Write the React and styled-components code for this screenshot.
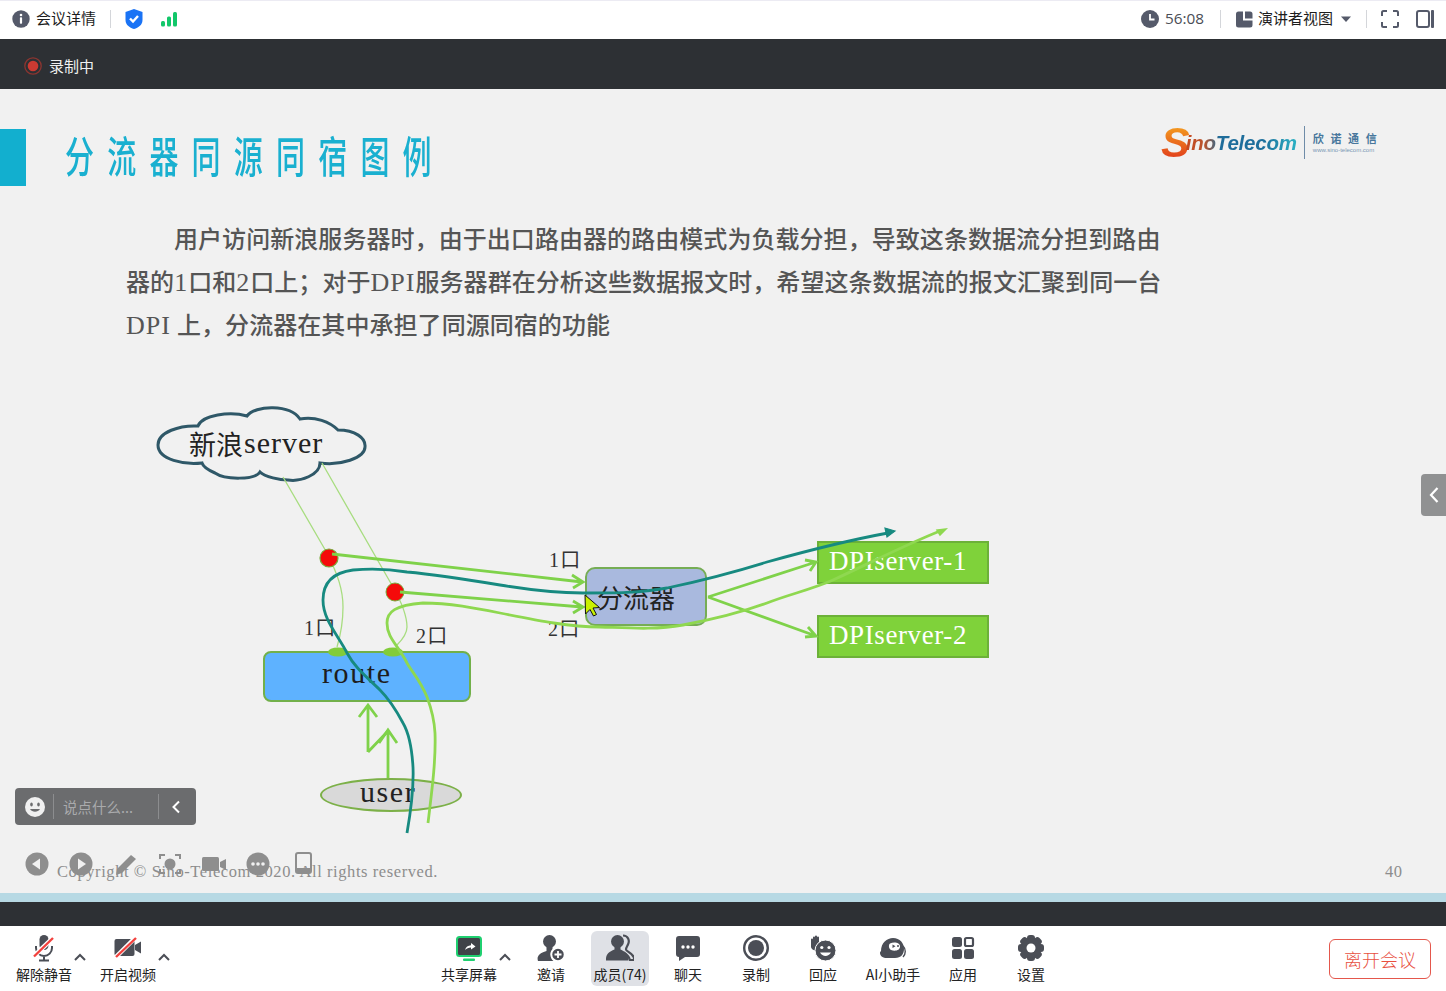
import React from 'react';
import styled, { createGlobalStyle } from 'styled-components';

const UI = '"Noto Sans CJK SC", "Liberation Sans", sans-serif';
const SERIF = '"Liberation Serif", "Noto Sans CJK SC", serif';
const INK = '#4b4e56';
const SLIDE_TOP = 89;

const Global = createGlobalStyle`
  html, body { margin: 0; padding: 0; background: #fff; }
  * { box-sizing: border-box; }
`;
const Page = styled.div`
  width: 1446px; height: 991px; display: flex; flex-direction: column; overflow: hidden;
  font-family: ${UI}; color: #222;
`;
const TopBar = styled.header`
  height: 39px; flex: none; background: #fff; border-top: 1px solid #ecebf3;
  display: flex; align-items: center; justify-content: space-between; padding: 0 12px 2px;
`;
const Cluster = styled.div`display: flex; align-items: center;`;
const TopText = styled.span`
  font-size: 15px; line-height: 20px; color: #1c1c1c; margin: 0 0 2px ${p => p.$ml || 6}px; white-space: nowrap;
`;
const Time = styled(TopText)`font-family: "Open Sans", "Liberation Sans", sans-serif; font-size: 15.3px; color: #4a4d55;`;
const Sep = styled.i`
  display: block; width: 1px; height: 18px; background: #d4d6da; margin: 0 ${p => p.$r ?? 14}px 0 ${p => p.$l ?? 14}px;
`;
const Gap = styled.span`flex: none; width: ${p => p.$w}px;`;
const RecBar = styled.div`
  height: 50px; flex: none; background: #2d3034; display: flex; align-items: center; padding: 3px 0 0 24px;
`;
const RecText = styled.span`color: #f0f0f0; font-size: 15px; margin: 0 0 1px 7px;`;
const Slide = styled.main`position: relative; flex: 1; background: #f1f1f1; overflow: hidden;`;
const SlideHead = styled.div`display: flex; align-items: flex-start; padding-top: 40px; height: 112px;`;
const Accent = styled.div`width: 26px; height: 57px; background: #12afcf; flex: none;`;
const Title = styled.h1`
  margin: -3px 0 0 39px; font-weight: 500; font-size: 29px; line-height: 57px; letter-spacing: 13.2px;
  color: #1ab0d0; transform: scaleY(1.5); transform-origin: 0 50%; white-space: nowrap;
`;
const Logo = styled.div`
  position: absolute; left: 1161px; top: 35px; display: flex; align-items: center; height: 36px;
`;
const LogoS = styled.span`
  font: italic 700 43px/36px "Liberation Sans", sans-serif; margin-right: -4px;
  background: linear-gradient(#f5a21f, #e03a1c); -webkit-background-clip: text; background-clip: text; color: transparent;
`;
const LogoWord = styled.span`
  font: italic 700 20.5px/30px "Liberation Sans", sans-serif; letter-spacing: -0.2px; margin-top: 2px;
  background: linear-gradient(90deg, #c8481f 0, #b8552f 17%, #1f6c9a 30%, #1d6f9c 70%, #2cb2c4 100%);
  -webkit-background-clip: text; background-clip: text; color: transparent;
`;
const LogoRule = styled.i`display: block; width: 1px; height: 33px; background: #6f8ca8; margin: 0 8px 0 7px;`;
const LogoCn = styled.div`display: flex; flex-direction: column; align-items: flex-start;`;
const LogoCnTop = styled.span`font-size: 11px; line-height: 16px; font-weight: 700; letter-spacing: 6.6px; color: #47769c; white-space: nowrap;`;
const LogoUrl = styled.span`font: 6px/8px "Liberation Sans", sans-serif; color: #7b97b4; white-space: nowrap;`;
const Para = styled.p`
  margin: 18px 0 0 126px; font-family: ${SERIF}; font-size: 24px; font-weight: 500; line-height: 43px; color: #555;
  letter-spacing: 0.06px; white-space: nowrap;
`;
const Line = styled.span`display: block; height: 43px; padding-left: ${p => p.$indent || 0}px;`;
const Latin = styled.span`font-size: 26px; line-height: 1; letter-spacing: 1px;`;
const Wires = styled.svg`position: absolute; left: 0; top: 0; width: 1446px; height: 804px; pointer-events: none;`;
const Node = styled.div`
  position: absolute; left: ${p => p.$x}px; top: ${p => p.$y - SLIDE_TOP}px; width: ${p => p.$w}px; height: ${p => p.$h}px;
  display: flex; align-items: center; font-family: ${SERIF}; white-space: nowrap;
`;
const CloudLabel = styled(Node)`font-size: 27px; color: #222;`;
const CloudWord = styled.span`font-size: 30px; letter-spacing: 1px; margin-left: 1px;`;
const PortLabel = styled(Node)`font-size: 20px; letter-spacing: 1.2px; color: #333;`;
const RouteBox = styled(Node)`
  background: #5eb2ff; border: 2px solid #72b04a; border-radius: 8px; font-size: 30px; letter-spacing: 1.6px; color: #1d1d1d;
  padding-left: 57px; padding-bottom: 7px;
`;
const SplitBox = styled(Node)`
  background: #a9b9de; border: 2px solid #76ad55; border-radius: 10px; font-size: 26px; color: #222; padding: 0 0 0 10px;
`;
const ServerBox = styled(Node)`
  background: #7fd23a; border: 2px solid #6cb138; color: #fff; font-size: 27px; padding: 0 0 2px 10px; letter-spacing: 0.6px;
`;
const UserOval = styled(Node)`background: #d9d9d9; border: 2px solid #7cb048; border-radius: 50%;`;
const UserLabel = styled(Node)`font-size: 30px; letter-spacing: 1.6px; color: #222;`;
const ChatBar = styled.div`
  position: absolute; left: 15px; top: ${788 - SLIDE_TOP}px; width: 181px; height: 37px; border-radius: 4px;
  background: #6b6c6e; display: flex; align-items: center; padding-left: 10px;
`;
const ChatDivider = styled.i`display: block; width: 1px; height: 25px; background: #8c8d8f;`;
const ChatHint = styled.span`width: 104px; padding-left: 9px; font-size: 14.5px; color: #a9aaac; white-space: nowrap;`;
const Playback = styled.div`
  position: absolute; left: 25px; top: ${852 - SLIDE_TOP}px; display: flex; gap: 20.3px; align-items: center;
`;
const FootText = styled.div`
  position: absolute; left: 57px; top: ${862 - SLIDE_TOP}px; font: 16.5px/19px ${SERIF}; letter-spacing: 0.58px; color: #8d8d8d; white-space: nowrap;
`;
const PageNum = styled.div`
  position: absolute; left: 1385px; top: ${862 - SLIDE_TOP}px; font: 16.5px/19px ${SERIF}; letter-spacing: 0.6px; color: #8d8d8d;
`;
const SideTab = styled.div`
  position: absolute; right: 0; top: ${474 - SLIDE_TOP}px; width: 25px; height: 42px; border-radius: 4px 0 0 4px;
  background: #909192; display: flex; align-items: center; justify-content: center;
`;
const Stripe = styled.div`height: 9px; flex: none; background: #b7d9e4;`;
const DarkBand = styled.div`height: 24px; flex: none; background: #2d3034;`;
const Toolbar = styled.footer`height: 65px; flex: none; background: #fff; display: flex; align-items: flex-start; padding: 5px 15px 0 16px;`;
const Tool = styled.div`
  flex: none; width: ${p => p.$w || 56}px; height: 55px; margin-left: ${p => p.$ml || 0}px; border-radius: 6px;
  background: ${p => (p.$active ? '#dfe1e6' : 'transparent')}; display: flex; flex-direction: column; align-items: center; padding-top: 3px;
`;
const ToolLabel = styled.span`font-size: 14px; line-height: 20px; margin-top: 2px; color: #222; white-space: nowrap;`;
const Caret = styled.div`flex: none; width: 16px; height: 55px; display: flex; justify-content: center; padding-top: 22px;`;
const Leave = styled.button`
  margin-left: auto; margin-top: 8px; width: 102px; height: 40px; border: 1px solid #e4574c; border-radius: 6px; background: #fff;
  color: #e8503f; font: 300 18px/24px ${UI}; padding: 0;
`;

const Ico = ({ children, s = 28, w, h, vb }) => (
  <svg width={w || s} height={h || s} viewBox={vb || `0 0 ${s} ${s}`} style={{ display: 'block', flex: 'none' }}>{children}</svg>
);

const MicIcon = () => (
  <Ico>
    <rect x="9.5" y="1" width="9" height="15" rx="4.5" fill={INK} />
    <path d="M6 12v2a8 8 0 0 0 16 0v-2M14 22v4M9 26.5h10" fill="none" stroke={INK} strokeWidth="2" />
    <path d="M3 23L23 4" stroke="#fff" strokeWidth="4.5" />
    <path d="M4 22.5L23 4" stroke="#f2413d" strokeWidth="2.4" />
  </Ico>
);
const VideoIcon = () => (
  <Ico>
    <rect x="0.5" y="5" width="20" height="17" rx="2" fill={INK} />
    <path d="M21 11l6-3.5v12L21 16z" fill={INK} />
    <path d="M1 24L21 4" stroke="#fff" strokeWidth="4.5" />
    <path d="M2 23L22 4" stroke="#f2413d" strokeWidth="2.4" />
  </Ico>
);
const ShareIcon = () => (
  <Ico>
    <rect x="2" y="3" width="24" height="19" rx="2.5" fill="#3f4248" stroke="#1fd070" strokeWidth="2" />
    <rect x="8" y="24.5" width="12" height="2.5" rx="1" fill="#1fd070" />
    <path d="M10 16c.8-3.2 3-4.6 6-4.8V9l4.5 3.4-4.5 3.2v-2.2c-2.4 0-4.4.8-6 2.6z" fill="#fff" />
  </Ico>
);
const InviteIcon = () => (
  <Ico>
    <circle cx="12.5" cy="7.5" r="6.5" fill={INK} />
    <path d="M9.5 13h6v2c-3 3-3 9 1 12H1c-1.5-4 1-8 8.5-10z" fill={INK} />
    <circle cx="21" cy="20.5" r="6.5" fill={INK} stroke="#fff" strokeWidth="1.5" />
    <path d="M21 17v7M17.5 20.5h7" stroke="#fff" strokeWidth="1.8" />
  </Ico>
);
const MembersIcon = () => (
  <Ico>
    <path d="M17 1.5c5 0 7 5 5 9-1 2-2 3-2 5 0 2 6 3 8 8v2.5h-4c-1-4-4-6-6.5-7.5" fill="none" stroke={INK} strokeWidth="2.2" />
    <circle cx="11.5" cy="7.5" r="6.5" fill={INK} />
    <path d="M8.5 12h6v3.5c3 1.5 7 3 8 8.5v2.5H0V24c1-5.5 5-7 8.5-8.5z" fill={INK} />
  </Ico>
);
const ChatIcon = () => (
  <Ico>
    <path d="M5 2h18a3 3 0 0 1 3 3v15a3 3 0 0 1-3 3H11l-6 4v-4a3 3 0 0 1-3-3V5a3 3 0 0 1 3-3z" fill={INK} />
    <circle cx="9" cy="13" r="1.7" fill="#fff" /><circle cx="14" cy="13" r="1.7" fill="#fff" /><circle cx="19" cy="13" r="1.7" fill="#fff" />
  </Ico>
);
const RecordIcon = () => (
  <Ico>
    <circle cx="14" cy="14" r="11.8" fill="none" stroke={INK} strokeWidth="2.4" />
    <circle cx="14" cy="14" r="8" fill={INK} />
  </Ico>
);
const ReactIcon = () => (
  <Ico>
    <path d="M2 13V5.5a1 1 0 0 1 2 0V3.500a1 1 0 0 1 2 0V2.500a1 1 0 0 1 2 0v1a1 1 0 0 1 2 0v7l-4 6c-2-.5-4-2-4-3.500z" fill={INK} />
    <circle cx="16.5" cy="16.5" r="10.5" fill={INK} stroke="#fff" strokeWidth="1" />
    <circle cx="12.8" cy="13.5" r="1.6" fill="#fff" /><circle cx="20" cy="13.5" r="1.6" fill="#fff" />
    <path d="M11 18.5c2.5 4.5 8.5 4.5 11 0z" fill="#fff" />
  </Ico>
);
const AiIcon = () => (
  <Ico>
    <path d="M2 17c0-8 6-13 12-13 7 0 11 5 11 11 0 5-3 9-9 9H8c-4 0-7-2-7-5 0-1 .5-1.5 1-2z" fill={INK} />
    <path d="M11 9.500c4-2 10-1 10 3s-5 5-9 3.500c-2-1-3-5-1-6.500z" fill="#fff" />
    <path d="M13.500 10.500l3 1.800-3 1.800z" fill={INK} /><circle cx="19" cy="12" r="1" fill={INK} />
    <path d="M24 12c3 3 3 8 0 11" fill="none" stroke={INK} strokeWidth="1.4" />
  </Ico>
);
const AppsIcon = () => (
  <Ico>
    <rect x="3" y="3" width="10" height="10" rx="2.5" fill={INK} />
    <rect x="16" y="4" width="8" height="8" rx="1.5" fill="#fff" stroke={INK} strokeWidth="2.2" />
    <rect x="3" y="15" width="10" height="10" rx="2.5" fill={INK} />
    <rect x="15" y="15" width="10" height="10" rx="2.5" fill={INK} />
  </Ico>
);
const GearIcon = () => (
  <Ico>
    {[0, 45, 90, 135].map(a => (
      <rect key={a} x="10" y="1" width="8" height="26" rx="3" fill={INK} transform={`rotate(${a} 14 14)`} />
    ))}
    <circle cx="14" cy="14" r="9.5" fill={INK} />
    <circle cx="14" cy="14" r="4.5" fill="#fff" />
  </Ico>
);
const Chevron = () => (
  <Ico w={14} h={8} vb="0 0 14 8"><path d="M2 7l5-5 5 5" fill="none" stroke={INK} strokeWidth="2" /></Ico>
);

const TOOLS = [
  { label: '解除静音', icon: <MicIcon />, caret: true },
  { label: '开启视频', icon: <VideoIcon />, caret: true, ml: 12 },
  { label: '共享屏幕', icon: <ShareIcon />, caret: true, ml: 269 },
  { label: '邀请', icon: <InviteIcon />, ml: 10 },
  { label: '成员(74)', icon: <MembersIcon />, ml: 12, w: 58, active: true },
  { label: '聊天', icon: <ChatIcon />, ml: 11 },
  { label: '录制', icon: <RecordIcon />, ml: 12 },
  { label: '回应', icon: <ReactIcon />, ml: 11 },
  { label: 'AI小助手', icon: <AiIcon />, ml: 14 },
  { label: '应用', icon: <AppsIcon />, ml: 14 },
  { label: '设置', icon: <GearIcon />, ml: 12 },
];

const PB = '#8e8e8e';
const PlaybackIcons = () => (
  <Playback>
    <Ico s={24}><circle cx="12" cy="12" r="11.5" fill={PB} /><path d="M15 6.5v11L7 12z" fill="#f1f1f1" /></Ico>
    <Ico s={24}><circle cx="12" cy="12" r="11.5" fill={PB} /><path d="M9 6.5v11l8-5.5z" fill="#f1f1f1" /></Ico>
    <Ico s={24}><path d="M3 17L17 3l5 4L8 21l-6 2z" fill={PB} /></Ico>
    <Ico s={24}>
      <path d="M2 7V3h5M17 3h5v4M22 17v4h-5M7 21H2v-4" fill="none" stroke={PB} strokeWidth="2" />
      <circle cx="12" cy="12" r="5.5" fill={PB} />
    </Ico>
    <Ico s={24}><rect x="0" y="5" width="17" height="14" rx="1.5" fill={PB} /><path d="M18 10l6-3v11l-6-3z" fill={PB} /></Ico>
    <Ico s={24}>
      <circle cx="12" cy="12" r="11.5" fill={PB} />
      <circle cx="7" cy="12" r="1.8" fill="#f1f1f1" /><circle cx="12" cy="12" r="1.8" fill="#f1f1f1" /><circle cx="17" cy="12" r="1.8" fill="#f1f1f1" />
    </Ico>
    <Ico s={24}><rect x="5" y="1" width="15" height="20" rx="2" fill="none" stroke={PB} strokeWidth="2" /><path d="M5 16h15v5H5z" fill={PB} /></Ico>
  </Playback>
);

const G1 = '#7fd24a';
const G2 = '#8fd850';
const TEAL = '#178a80';

const Diagram = () => (
  <Wires viewBox={`0 ${SLIDE_TOP} 1446 804`}>
    <path d="M158 445C158 432 180 425 198 426C202 415 230 411 247 416C255 405 290 404 300 419C315 416 330 422 338 430C355 430 366 438 365 447C365 458 340 466 320 463C320 475 300 482 288 480C280 480 265 477 260 472C255 480 225 480 215 473C208 470 203 466 202 463C185 465 158 460 158 445Z" fill="none" stroke="#2f5868" strokeWidth="3" />
    <g fill="none" stroke="#a8dd80" strokeWidth="1.3">
      <path d="M283 477L327 553C338 575 343 590 343 607C343 625 340 637 337 647" />
      <path d="M322 463L393 587C402 603 407 615 407 627C407 634 402 640 397 645" />
    </g>
    <ellipse cx="338" cy="652" rx="10" ry="4.5" fill="#82cc3a" />
    <ellipse cx="393" cy="652" rx="10" ry="4.5" fill="#82cc3a" />
    <circle cx="329" cy="558" r="9" fill="#f50a0a" stroke="#79a93a" strokeWidth="1.2" />
    <circle cx="395" cy="592" r="9" fill="#f50a0a" stroke="#79a93a" strokeWidth="1" />
    <g fill="none" stroke={G1} strokeWidth="2.8">
      <path d="M332 554L582 582M572 575L583 582L573 588" />
      <path d="M400 592L582 607M573 601L583 607L573 613" />
      <path d="M708 597L816 562M805 560L816 562L810 571" />
      <path d="M708 597L816 636M808 627L816 636L805 637" />
      <path d="M388 778V731M379 743L388 730L397 743" />
      <path d="M388 731L368 752M368 752V706M359 717L368 705L377 717" />
    </g>
    <path d="M428 823C432 790 436 760 435 733C434 715 430 705 427 697C420 680 412 672 407 663C398 645 387 638 387 623C387 612 395 605 423 603C450 603 475 608 500 613C540 621 570 627 600 627C630 628 655 630 683 625C710 620 740 613 767 603C790 594 810 590 833 580C870 563 905 545 940 531" fill="none" stroke={G2} strokeWidth="2.8" />
    <path d="M946 529L937 530L940 535Z" fill={G2} stroke={G2} strokeWidth="1.5" />
    <path d="M407 833C411 810 414 790 413 767C412 750 410 735 403 723C395 708 388 698 380 690C368 678 355 668 347 653C338 635 323 620 323 600C323 585 330 573 353 570C375 568 395 570 407 572C440 575 470 580 500 585C530 590 555 593 583 593C615 593 640 593 667 588C700 581 735 572 767 562C810 550 850 540 888 533" fill="none" stroke={TEAL} strokeWidth="2.8" />
    <path d="M895 531L885 528L887 537Z" fill={TEAL} stroke={TEAL} strokeWidth="1.2" />
    <path d="M585 595l.5 19 4.500-4.500 3.500 6.500 3-1.500-3.500-6.500 6.500-.5z" fill="#c9f000" stroke="#111" strokeWidth="1" />
  </Wires>
);

const Face = () => (
  <Ico s={20}>
    <circle cx="10" cy="10" r="10" fill="#f0f0f0" />
    <ellipse cx="6.5" cy="7.5" rx="1.3" ry="2" fill="#6b6c6e" /><ellipse cx="13.5" cy="7.5" rx="1.3" ry="2" fill="#6b6c6e" />
    <path d="M5 12c2 3.5 8 3.5 10 0z" fill="#6b6c6e" />
  </Ico>
);

export default function App() {
  return (
    <Page>
      <Global />
      <TopBar>
        <Cluster>
          <Ico s={18}><circle cx="9" cy="9" r="8.7" fill="#555a6a" /><circle cx="9" cy="5" r="1.3" fill="#fff" /><rect x="7.9" y="7.3" width="2.2" height="6.5" rx=".8" fill="#fff" /></Ico>
          <TopText>会议详情</TopText>
          <Sep />
          <Ico w={18} h={20} vb="0 0 18 20"><path d="M9 0l8.5 3v8c0 5-4 7.5-8.5 9C4.5 18.5.5 16 .5 11V3z" fill="#1a73f5" /><path d="M5 9.5l3 3L13 7" fill="none" stroke="#fff" strokeWidth="2.4" /></Ico>
          <Gap $w={17} />
          <Ico w={18} h={16} vb="0 0 18 16"><rect x="1" y="10" width="4" height="5.5" rx="1.5" fill="#12c76a" /><rect x="7" y="5.5" width="4" height="10" rx="1.5" fill="#12c76a" /><rect x="13" y="1" width="4" height="14.5" rx="1.5" fill="#12c76a" /></Ico>
        </Cluster>
        <Cluster>
          <Ico s={18}><circle cx="9" cy="9" r="9" fill="#555a6a" /><path d="M9 4v5.5h4.5" fill="none" stroke="#fff" strokeWidth="1.8" /></Ico>
          <Time>56:08</Time>
          <Sep $l={16} $r={15} />
          <Ico s={17}><path d="M2.5 0.5H7V9.5H16.5V14a2.5 2.5 0 0 1-2.5 2.5H2.5A2.5 2.5 0 0 1 0 14V3A2.5 2.5 0 0 1 2.5.5zM9 .5h5a2.5 2.5 0 0 1 2.5 2.5V7.5H9z" fill="#555a6a" /></Ico>
          <TopText $ml={5}>演讲者视图</TopText>
          <Gap $w={7} />
          <Ico w={12} h={7} vb="0 0 12 7"><path d="M1 .5h10L6 6z" fill="#555a6a" /></Ico>
          <Sep $l={14} $r={14} />
          <Ico s={18}><path d="M1 6V2.5A1.5 1.5 0 0 1 2.5 1H6M12 1h3.5A1.5 1.5 0 0 1 17 2.5V6M17 12v3.5a1.5 1.5 0 0 1-1.5 1.5H12M6 17H2.5A1.5 1.5 0 0 1 1 15.5V12" fill="none" stroke="#555a6a" strokeWidth="2" /></Ico>
          <Gap $w={17} />
          <Ico s={18}><rect x="1" y="1" width="12" height="16" rx="2" fill="none" stroke="#555a6a" strokeWidth="2" /><rect x="15" y="0" width="3" height="18" rx="1" fill="#555a6a" /></Ico>
        </Cluster>
      </TopBar>
      <RecBar>
        <Ico s={18}><circle cx="9" cy="9" r="8.2" fill="none" stroke="#8c3530" strokeWidth="1.3" /><circle cx="9" cy="9" r="5.3" fill="#cc3a32" /></Ico>
        <RecText>录制中</RecText>
      </RecBar>
      <Slide>
        <SlideHead>
          <Accent />
          <Title>分流器同源同宿图例</Title>
        </SlideHead>
        <Logo>
          <LogoS>S</LogoS>
          <LogoWord>inoTelecom</LogoWord>
          <LogoRule />
          <LogoCn>
            <LogoCnTop>欣诺通信</LogoCnTop>
            <LogoUrl>www.sino-telecom.com</LogoUrl>
          </LogoCn>
        </Logo>
        <Para>
          <Line $indent={48}>用户访问新浪服务器时，由于出口路由器的路由模式为负载分担，导致这条数据流分担到路由</Line>
          <Line>器的<Latin>1</Latin>口和<Latin>2</Latin>口上；对于<Latin>DPI</Latin>服务器群在分析这些数据报文时，希望这条数据流的报文汇聚到同一台</Line>
          <Line><Latin>DPI</Latin> 上，分流器在其中承担了同源同宿的功能</Line>
        </Para>

        <CloudLabel $x={189} $y={426} $w={140} $h={34}>新浪<CloudWord>server</CloudWord></CloudLabel>
        <PortLabel $x={549} $y={546} $w={40} $h={24}>1口</PortLabel>
        <PortLabel $x={548} $y={615} $w={40} $h={24}>2口</PortLabel>
        <PortLabel $x={304} $y={614} $w={40} $h={24}>1口</PortLabel>
        <PortLabel $x={416} $y={622} $w={40} $h={24}>2口</PortLabel>
        <RouteBox $x={263} $y={651} $w={208} $h={51}>route</RouteBox>
        <SplitBox $x={585} $y={567} $w={122} $h={59}>分流器</SplitBox>
        <ServerBox $x={817} $y={541} $w={172} $h={43}>DPIserver-1</ServerBox>
        <ServerBox $x={817} $y={615} $w={172} $h={43}>DPIserver-2</ServerBox>
        <UserOval $x={320} $y={778} $w={142} $h={34} />
        <UserLabel $x={360} $y={775} $w={64} $h={34}>user</UserLabel>
        <Diagram />

        <FootText>Copyright © Sino-Telecom 2020. All rights reserved.</FootText>
        <PageNum>40</PageNum>
        <PlaybackIcons />
        <ChatBar>
          <Face />
          <Gap $w={8} />
          <ChatDivider />
          <ChatHint>说点什么...</ChatHint>
          <ChatDivider />
          <Gap $w={12} />
          <Ico w={10} h={14} vb="0 0 10 14"><path d="M8 1.5L2.5 7 8 12.5" fill="none" stroke="#fff" strokeWidth="2" /></Ico>
        </ChatBar>
        <SideTab>
          <Ico w={12} h={18} vb="0 0 12 18"><path d="M9.5 2L3 9l6.5 7" fill="none" stroke="#fff" strokeWidth="2.2" /></Ico>
        </SideTab>
      </Slide>
      <Stripe />
      <DarkBand />
      <Toolbar>
        {TOOLS.map(t => (
          <React.Fragment key={t.label}>
            <Tool $w={t.w} $ml={t.ml} $active={t.active}>
              {t.icon}
              <ToolLabel>{t.label}</ToolLabel>
            </Tool>
            {t.caret && <Caret><Chevron /></Caret>}
          </React.Fragment>
        ))}
        <Leave>离开会议</Leave>
      </Toolbar>
    </Page>
  );
}
